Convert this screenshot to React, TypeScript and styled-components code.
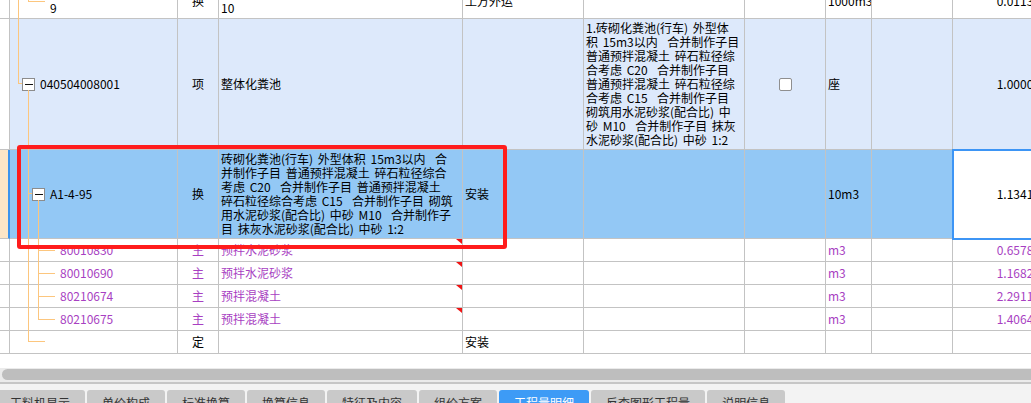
import styled, { createGlobalStyle } from 'styled-components';

type Tone = 'plain' | 'group' | 'selected' | 'material';

const COLS = '10px 168px 41px 244px 121px 161px 81px 46px 81px 100px';

const groupDesc = [
  '1.砖砌化粪池(行车) 外型体',
  '积 15m3以内  合并制作子目',
  '普通预拌混凝土 碎石粒径综',
  '合考虑 C20  合并制作子目',
  '普通预拌混凝土 碎石粒径综',
  '合考虑 C15  合并制作子目',
  '砌筑用水泥砂浆(配合比) 中',
  '砂 M10  合并制作子目 抹灰',
  '水泥砂浆(配合比) 中砂 1:2',
];

const quotaName = [
  '砖砌化粪池(行车) 外型体积 15m3以内  合',
  '并制作子目 普通预拌混凝土 碎石粒径综合',
  '考虑 C20  合并制作子目 普通预拌混凝土',
  '碎石粒径综合考虑 C15  合并制作子目 砌筑',
  '用水泥砂浆(配合比) 中砂 M10  合并制作子',
  '目 抹灰水泥砂浆(配合比) 中砂 1:2',
];

const materials = [
  { code: '80010830', name: '预拌水泥砂浆', qty: '0.65784' },
  { code: '80010690', name: '预拌水泥砂浆', qty: '1.16826' },
  { code: '80210674', name: '预拌混凝土', qty: '2.29118' },
  { code: '80210675', name: '预拌混凝土', qty: '1.40640' },
];

const tabs = ['工料机显示', '单价构成', '标准换算', '换算信息', '特征及内容', '组价方案', '工程量明细', '反查图形工程量', '说明信息'];

function App() {
  return (
    <>
      <GlobalStyle />
      <Screen>
        <GridViewport>
          <Table>
            {/* row scrolled half out of view: only its second text line shows */}
            <Row $tone="plain" $h={36}>
              <IndexCell />
              <CodeCell $indent={40}>
                <Lines>
                  <Line />
                  <Line>9</Line>
                </Lines>
              </CodeCell>
              <TypeCell>换</TypeCell>
              <TextCell>
                <Lines>
                  <Line />
                  <Line>10</Line>
                </Lines>
              </TextCell>
              <TextCell>土方外运</TextCell>
              <TextCell />
              <TypeCell />
              <TextCell>1000m3</TextCell>
              <TextCell />
              <NumCell>0.01134</NumCell>
            </Row>

            <Row $tone="group" $h={131}>
              <IndexCell />
              <CodeCell $indent={12}>
                <ExpandBox />
                040504008001
              </CodeCell>
              <TypeCell>项</TypeCell>
              <TextCell>整体化粪池</TextCell>
              <TextCell />
              <TextCell>
                <Lines>
                  {groupDesc.map((l, i) => (
                    <Line key={i}>{l}</Line>
                  ))}
                </Lines>
              </TextCell>
              <TypeCell>
                <CheckBox />
              </TypeCell>
              <TextCell>座</TextCell>
              <TextCell />
              <NumCell>1.00000</NumCell>
            </Row>

            <Row $tone="selected" $h={89}>
              <IndexCell $active />
              <CodeCell $indent={22}>
                <ExpandBox />
                A1-4-95
              </CodeCell>
              <TypeCell>换</TypeCell>
              <TextCell>
                <Lines>
                  {quotaName.map((l, i) => (
                    <Line key={i}>{l}</Line>
                  ))}
                </Lines>
              </TextCell>
              <TextCell>安装</TextCell>
              <TextCell />
              <TypeCell />
              <TextCell>10m3</TextCell>
              <TextCell />
              <EditCell>1.13415</EditCell>
            </Row>

            {materials.map((m) => (
              <Row key={m.code} $tone="material" $h={23}>
                <IndexCell />
                <CodeCell $indent={50}>{m.code}</CodeCell>
                <TypeCell>主</TypeCell>
                <TextCell $mark>{m.name}</TextCell>
                <TextCell />
                <TextCell />
                <TypeCell />
                <TextCell>m3</TextCell>
                <TextCell />
                <NumCell>{m.qty}</NumCell>
              </Row>
            ))}

            <Row $tone="plain" $h={23}>
              <IndexCell />
              <CodeCell $indent={50} />
              <TypeCell>定</TypeCell>
              <TextCell />
              <TextCell>安装</TextCell>
              <TextCell />
              <TypeCell />
              <TextCell />
              <TextCell />
              <NumCell />
            </Row>
          </Table>

          <TreeLines width="60" height="368" viewBox="0 0 60 368">
            <g stroke="#fcc67e" strokeWidth="1" fill="none" shapeRendering="crispEdges">
              <path d="M28.5 -4 V1.5 H45" />
              <path d="M18.5 0 V83.5 H22" />
              <path d="M28.5 90 V341.5 H45" />
              <path d="M28.5 193.5 H32" />
              <path d="M38.5 200 V319.5 H55" />
              <path d="M38.5 250.5 H55 M38.5 273.5 H55 M38.5 296.5 H55" />
            </g>
          </TreeLines>

          <Highlight />
        </GridViewport>

        <ScrollTrack>
          <ScrollThumb />
        </ScrollTrack>
        <Divider />

        <TabBar>
          {tabs.map((t) => (
            <Tab key={t} $active={t === '工程量明细'}>
              {t}
            </Tab>
          ))}
        </TabBar>
      </Screen>
    </>
  );
}

export default App;

const GlobalStyle = createGlobalStyle`
  html, body {
    margin: 0;
    padding: 0;
    background: #fff;
  }
  body {
    font-family: 'Noto Sans CJK SC', 'Liberation Sans', sans-serif;
    font-size: 12px;
  }
`;

const Screen = styled.div`
  display: flex;
  flex-direction: column;
  width: 1031px;
  height: 403px;
  overflow: hidden;
  background: #fff;
`;

const GridViewport = styled.div`
  position: relative;
  flex: none;
  height: 368px;
  overflow: hidden;
`;

const Table = styled.div`
  display: flex;
  flex-direction: column;
  width: 1053px;
  margin-top: -17px;
`;

const toneBg: Record<Tone, string> = {
  plain: '#ffffff',
  group: '#dde9fb',
  selected: '#93c8f5',
  material: '#ffffff',
};

const Row = styled.div<{ $tone: Tone; $h: number }>`
  display: grid;
  grid-template-columns: ${COLS};
  height: ${(p) => p.$h}px;
  background: ${(p) => toneBg[p.$tone]};
  color: ${(p) => (p.$tone === 'material' ? '#a83fc2' : '#000')};
`;

const Cell = styled.div`
  position: relative;
  display: flex;
  align-items: center;
  box-sizing: border-box;
  min-width: 0;
  border-right: 1px solid #c3c3c3;
  border-bottom: 1px solid #c3c3c3;
  overflow: hidden;
  white-space: pre;
  line-height: 14px;
  word-spacing: 2px;
`;

const IndexCell = styled(Cell)<{ $active?: boolean }>`
  background: ${(p) => (p.$active ? '#fde6c7' : '#fff')};
  border-right: ${(p) => (p.$active ? '2px solid #3c94ee' : '1px solid #c3c3c3')};
`;

const CodeCell = styled(Cell)<{ $indent: number }>`
  padding-left: ${(p) => p.$indent}px;
`;

const TypeCell = styled(Cell)`
  justify-content: center;
`;

const TextCell = styled(Cell)<{ $mark?: boolean }>`
  padding-left: 2px;

  &::after {
    display: ${(p) => (p.$mark ? 'block' : 'none')};
    position: absolute;
    top: 0;
    right: 0;
    border-top: 5px solid #f01313;
    border-left: 6px solid transparent;
    content: '';
  }
`;

const NumCell = styled(Cell)`
  justify-content: flex-end;
  padding-right: 12px;
`;

const EditCell = styled(NumCell)`
  z-index: 1;
  background: #fff;
  color: #000;
  outline: 2px solid #3d95f5;
  outline-offset: -1px;
`;

const Lines = styled.div`
  display: flex;
  flex-direction: column;
`;

const Line = styled.div`
  height: 14px;
  white-space: pre;
`;

const ExpandBox = styled.span`
  position: relative;
  flex: none;
  box-sizing: border-box;
  margin-right: 5px;
  border: 1px solid #8c8c8c;
  background: #fff;
  width: 13px;
  height: 13px;

  &::after {
    position: absolute;
    top: 5px;
    left: 2px;
    right: 1px;
    height: 1px;
    background: #111;
    content: '';
  }
`;

const CheckBox = styled.span`
  box-sizing: border-box;
  border: 1px solid #8f8f8f;
  border-radius: 2px;
  background: #fff;
  width: 13px;
  height: 13px;
`;

const TreeLines = styled.svg`
  position: absolute;
  top: 0;
  left: 0;
  z-index: 2;
  pointer-events: none;
`;

const Highlight = styled.div`
  position: absolute;
  top: 145px;
  left: 17px;
  z-index: 3;
  box-sizing: border-box;
  border: 4px solid #ff1c1c;
  border-radius: 3px;
  width: 490px;
  height: 104px;
  pointer-events: none;
`;

const ScrollTrack = styled.div`
  flex: none;
  box-sizing: border-box;
  padding: 1px 0 2px 2px;
  background: #ebebeb;
  height: 14px;
`;

const ScrollThumb = styled.div`
  border-radius: 6px 0 0 6px;
  background: #bebebe;
  height: 11px;
`;

const Divider = styled.div`
  flex: none;
  background: #c6c6c6;
  height: 2px;
`;

const TabBar = styled.div`
  display: flex;
  flex: none;
  gap: 2px;
  box-sizing: border-box;
  margin-left: -5px;
  padding-top: 6px;
  background: #f3f3f3;
  height: 19px;
  overflow: hidden;
`;

const Tab = styled.div<{ $active?: boolean }>`
  flex: none;
  box-sizing: border-box;
  padding: 5px 15px 0;
  border-radius: 3px 3px 0 0;
  background: ${(p) => (p.$active ? '#3d9bf6' : '#c9c9c9')};
  color: ${(p) => (p.$active ? '#fff' : '#333')};
  height: 24px;
  font-size: 12px;
  line-height: 16px;
  white-space: nowrap;
`;
